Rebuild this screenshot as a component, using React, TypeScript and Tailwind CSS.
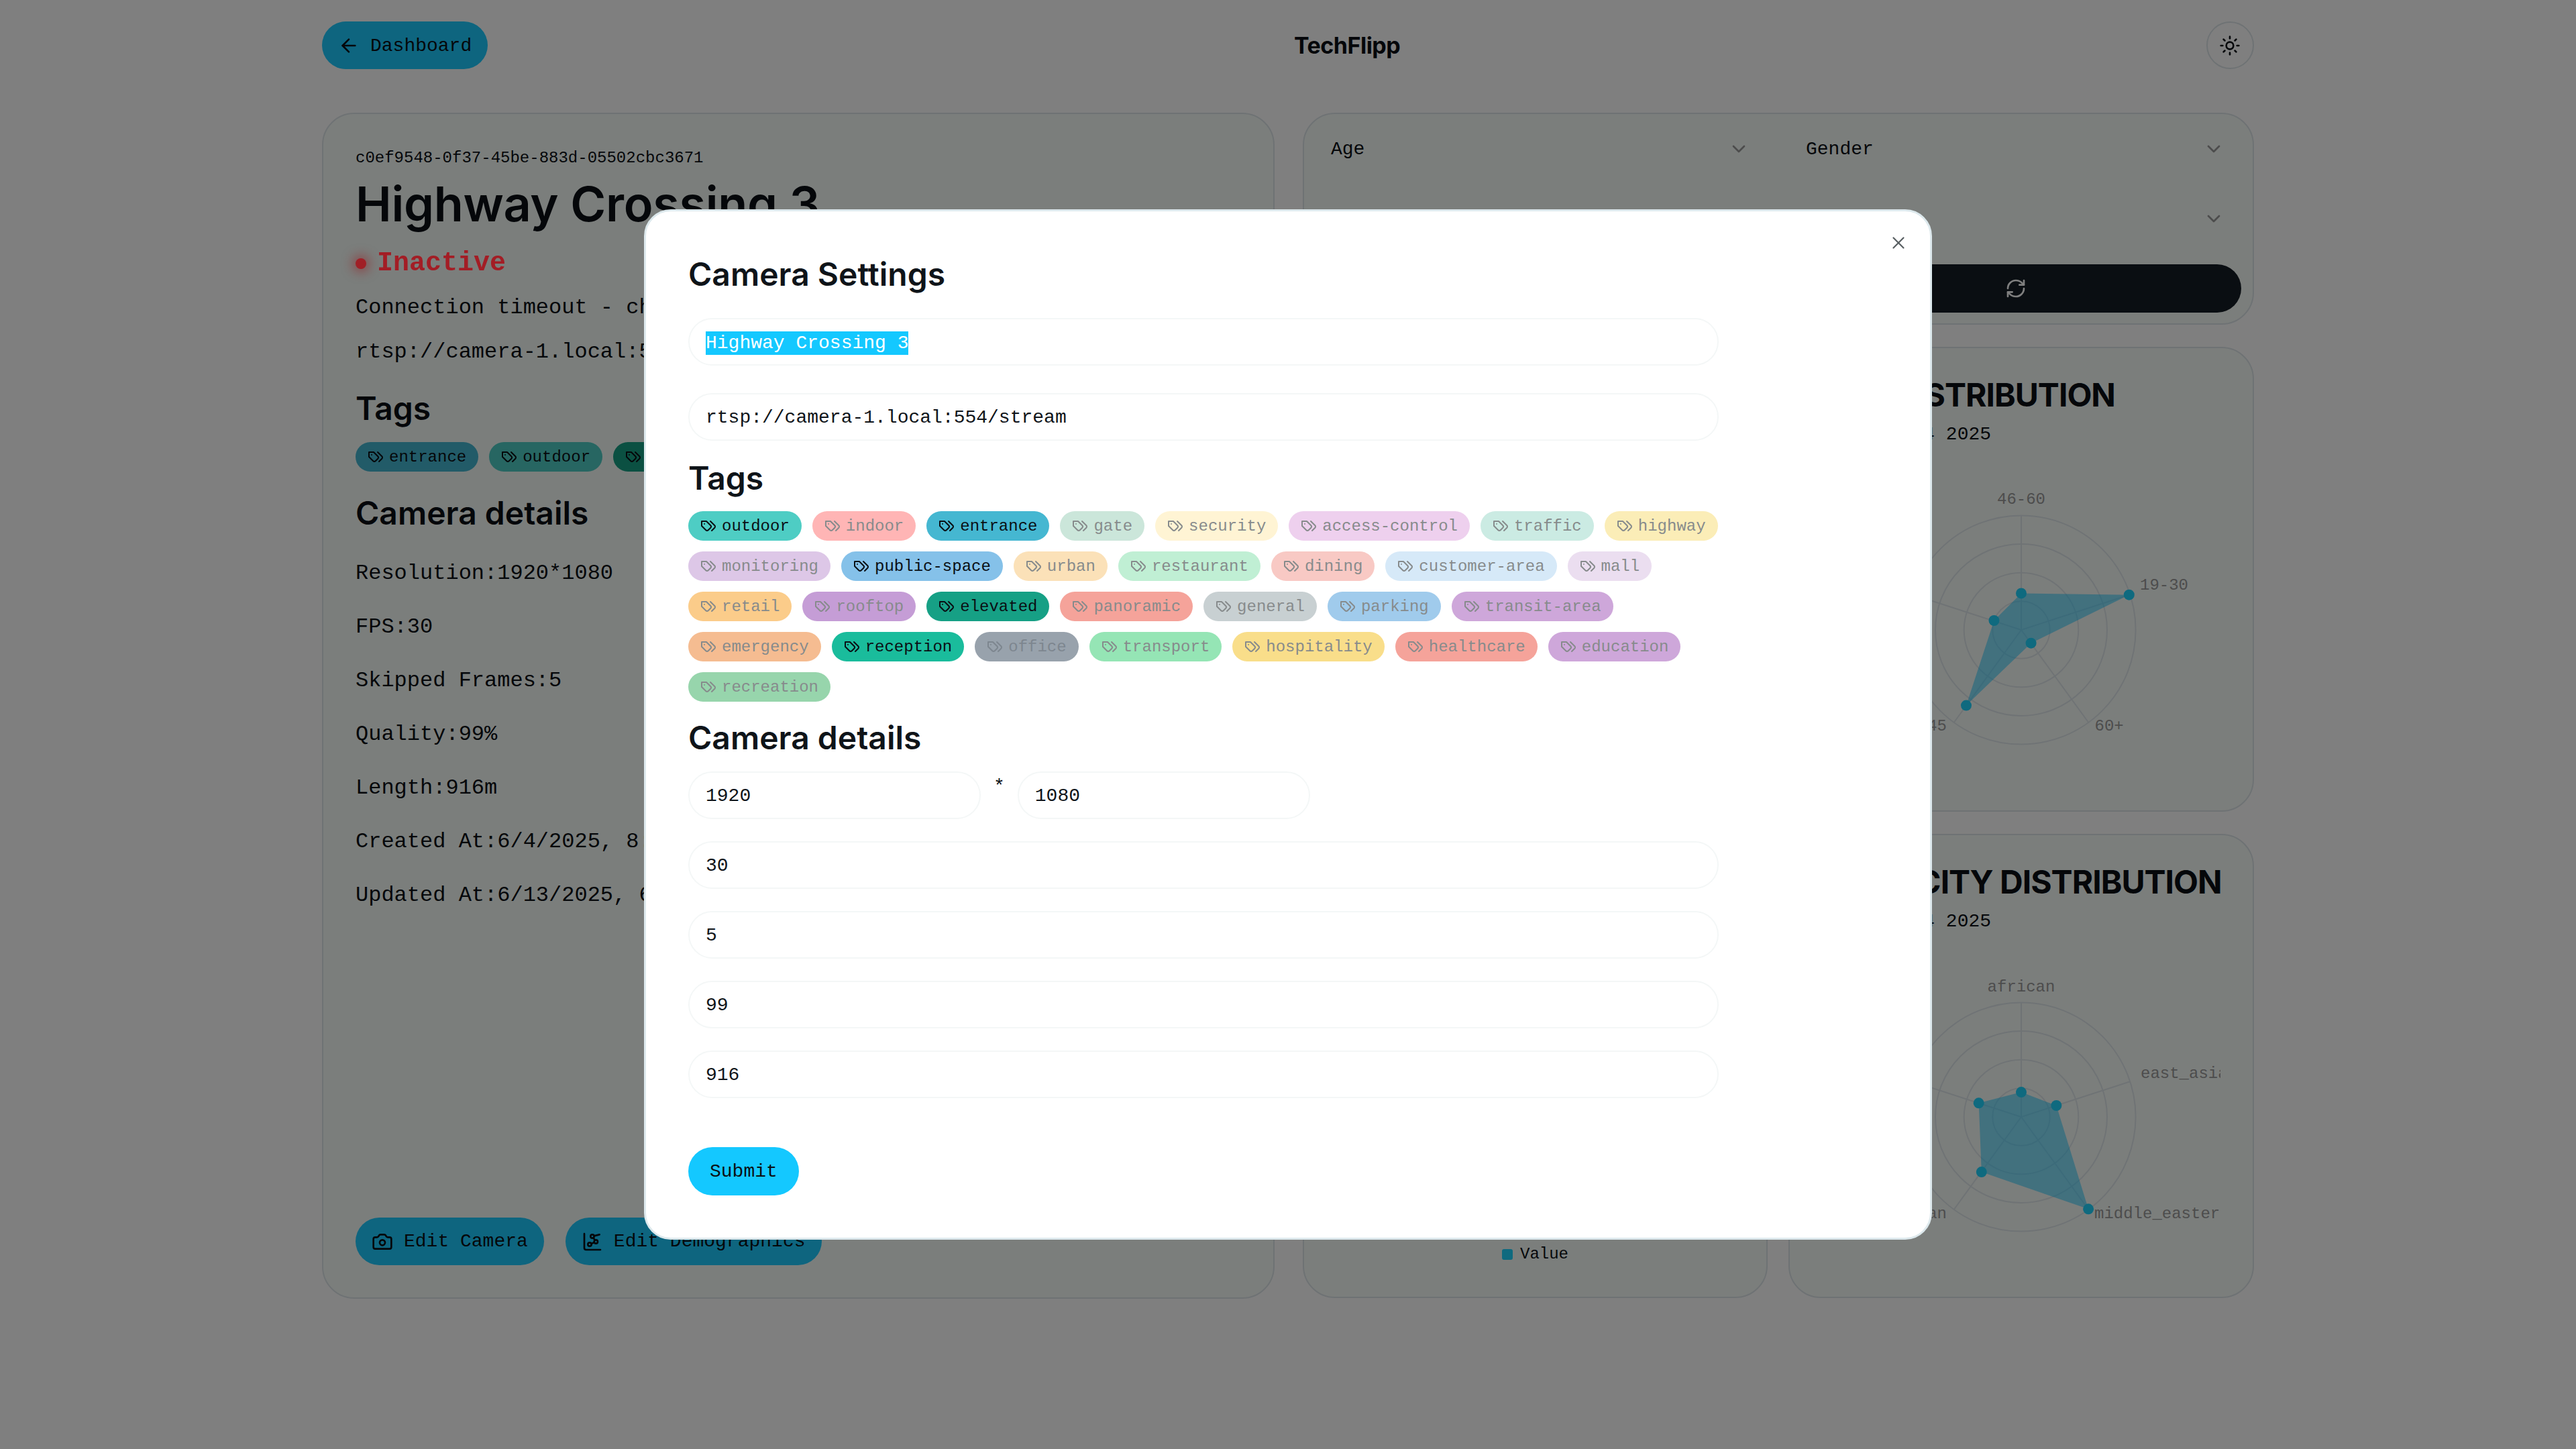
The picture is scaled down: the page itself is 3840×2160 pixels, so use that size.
import { ArrowLeft, Camera, ChartNetwork, ChevronDown, RefreshCw, Sun, X } from 'lucide-react';

const MONO = "font-['Liberation_Mono',monospace]";
const SANS = "font-['Inter',sans-serif]";

type Tag = { name: string; bg: string; active?: boolean; text?: string };
type AxisLabel = { text: string; x: number; y: number; anchor: 'start' | 'middle' | 'end' };

const TAGS: Tag[] = [
  { name: 'outdoor', bg: 'bg-[#4ecdc4]', active: true },
  { name: 'indoor', bg: 'bg-[#ffb5b5]' },
  { name: 'entrance', bg: 'bg-[#45b7d1]', active: true },
  { name: 'gate', bg: 'bg-[#cbe6da]' },
  { name: 'security', bg: 'bg-[#fff4d4]' },
  { name: 'access-control', bg: 'bg-[#eed0ee]' },
  { name: 'traffic', bg: 'bg-[#cbebe3]' },
  { name: 'highway', bg: 'bg-[#fbedb7]' },
  { name: 'monitoring', bg: 'bg-[#ddc7e7]' },
  { name: 'public-space', bg: 'bg-[#85c1e9]', active: true },
  { name: 'urban', bg: 'bg-[#fbe1b8]' },
  { name: 'restaurant', bg: 'bg-[#c0efd4]' },
  { name: 'dining', bg: 'bg-[#f8c9c4]' },
  { name: 'customer-area', bg: 'bg-[#d6e9f8]' },
  { name: 'mall', bg: 'bg-[#ebdef0]' },
  { name: 'retail', bg: 'bg-[#fbcc8a]' },
  { name: 'rooftop', bg: 'bg-[#c59dd6]' },
  { name: 'elevated', bg: 'bg-[#16a085]', active: true },
  { name: 'panoramic', bg: 'bg-[#f5a39a]' },
  { name: 'general', bg: 'bg-[#c8d0d2]' },
  { name: 'parking', bg: 'bg-[#a0cbec]' },
  { name: 'transit-area', bg: 'bg-[#cea7da]' },
  { name: 'emergency', bg: 'bg-[#f5bc91]' },
  { name: 'reception', bg: 'bg-[#1abc9c]', active: true },
  { name: 'office', bg: 'bg-[#98a2ac]', text: 'text-[#7d868f]' },
  { name: 'transport', bg: 'bg-[#95e5b5]' },
  { name: 'hospitality', bg: 'bg-[#f9de8a]' },
  { name: 'healthcare', bg: 'bg-[#f5a39a]' },
  { name: 'education', bg: 'bg-[#cea7da]' },
  { name: 'recreation', bg: 'bg-[#97d5ac]' },
];

const DETAILS = [
  'Resolution:1920*1080',
  'FPS:30',
  'Skipped Frames:5',
  'Quality:99%',
  'Length:916m',
  'Created At:6/4/2025, 8:15:32 AM',
  'Updated At:6/13/2025, 6:42:10 PM',
];

const AGE_POINTS = [
  [0, -54.6],
  [160.8, -52.3],
  [14.6, 19.7],
  [-82, 112.6],
  [-40.5, -14],
];

const ETHNICITY_POINTS = [
  [0, -36.9],
  [52.4, -17],
  [100.1, 137.3],
  [-59.2, 82.1],
  [-63.3, -20.7],
];

function TagIcon() {
  return (
    <svg width="24" height="24" viewBox="0 0 24 24" fill="none" stroke="currentColor" strokeWidth="2" strokeLinecap="round" strokeLinejoin="round" className="shrink-0">
      <path d="M9 5H2v7l6.29 6.29c.94.94 2.48.94 3.42 0l3.58-3.58c.94-.94.94-2.48 0-3.42L9 5Z" />
      <path d="M6 9.01V9" />
      <path d="m15 5 6.3 6.3a2.4 2.4 0 0 1 0 3.4L17 19" />
    </svg>
  );
}

function TagPill({ tag }: { tag: Tag }) {
  const color = tag.active ? 'text-[#0a0f14]' : tag.text || 'text-[#878b8c]';
  return (
    <span className={`inline-flex items-center gap-2 h-[44px] px-[18px] rounded-full text-[24px] ${tag.bg} ${color}`}>
      <TagIcon />
      <span className="pt-[1px]">{tag.name}</span>
    </span>
  );
}

function Field({ value, className = 'w-full' }: { value: string; className?: string }) {
  return (
    <div className={`h-[71px] flex items-center px-6 pt-[3px] border-2 border-[#f4f7f7] rounded-full text-[28px] text-[#0f1419] ${className}`}>
      {value}
    </div>
  );
}

function SelectBox({ label }: { label?: string }) {
  return (
    <div className="h-[71px] flex items-center justify-between pl-[23px] pr-[25px] text-[28px] text-[#0a0f14]">
      <span className="pt-[2px]">{label}</span>
      <ChevronDown size={32} className="text-[#999999]" />
    </div>
  );
}

function RadarChart({ points, labels }: { points: number[][]; labels: AxisLabel[] }) {
  const spokes = [-90, -18, 54, 126, 198];
  const poly = points.map(([x, y]) => `${x},${y}`).join(' ');
  return (
    <svg width="594" height="469" viewBox="-297 -247 594 469">
      {[42.7, 85.3, 128, 170.6].map((r) => (
        <circle key={r} r={r} fill="none" stroke="#dfe7ea" strokeWidth="2" />
      ))}
      {spokes.map((a) => (
        <line key={a} x1="0" y1="0" x2={170.6 * Math.cos((a * Math.PI) / 180)} y2={170.6 * Math.sin((a * Math.PI) / 180)} stroke="#dfe7ea" strokeWidth="2" />
      ))}
      <polygon points={poly} fill="#14c8ff" fillOpacity="0.5" />
      {points.map(([x, y], i) => (
        <circle key={i} cx={x} cy={y} r="8" fill="#1ed4ff" />
      ))}
      {labels.map((l) => (
        <text key={l.text} x={l.x} y={l.y} textAnchor={l.anchor} dominantBaseline="central" fontSize="24" fill="#9a9a9a">
          {l.text}
        </text>
      ))}
    </svg>
  );
}

function ChartCard({ title, points, labels }: { title: string; points: number[][]; labels: AxisLabel[] }) {
  return (
    <div className="flex-1 px-12 pt-[50px] border-2 border-[#dde5e8] rounded-[48px] bg-[#f7fcf9]">
      <h3 className={`${SANS} text-[48px] leading-[40px] font-bold tracking-[-1px] whitespace-nowrap text-[#0a0f14]`}>{title}</h3>
      <p className="mt-[18px] mb-[23px] text-[28px] leading-[42px] text-[#0a0f14]">From Jun 4 2025</p>
      <RadarChart points={points} labels={labels} />
    </div>
  );
}

export default function App() {
  const leftTags = [TAGS[2], TAGS[0], TAGS[17]];

  return (
    <div className={`${MONO} relative min-h-screen bg-white px-[480px] pt-8 text-[#0a0f14]`}>
      <header className="flex items-center justify-between h-[71px]">
        <button className="flex items-center gap-4 h-[71px] px-6 rounded-full bg-[#1ccaff] text-[28px] text-[#0a0f14]">
          <ArrowLeft size={32} />
          <span className="pt-[2px]">Dashboard</span>
        </button>
        <div className={`${SANS} text-[34px] font-bold tracking-[-0.5px] text-[#0a0f14]`}>TechFlipp</div>
        <button className="flex items-center justify-center w-[71px] h-[71px] border-2 border-[#dde5e8] rounded-full">
          <Sun size={32} />
        </button>
      </header>

      <main className="grid grid-cols-[1420px_1418px] gap-x-[42px] mt-[65px]">
        <section className="flex flex-col h-[1768px] p-12 border-2 border-[#dde5e8] rounded-[48px] bg-[#f7fcf9] overflow-hidden">
          <div className="text-[24px] leading-[36px]">c0ef9548-0f37-45be-883d-05502cbc3671</div>
          <h1 className={`${SANS} mt-[10px] text-[72px] leading-[80px] font-semibold tracking-[-0.3px] whitespace-nowrap`}>Highway Crossing 3</h1>
          <div className="relative z-[60] flex items-center gap-4 mt-[19px] h-[60px] text-[40px] font-bold text-[#a31d25]">
            <span className="w-4 h-4 rounded-full bg-[#a01f26] shadow-[0_0_16px_5px_rgba(150,28,32,0.5)]" />
            Inactive
          </div>
          <div className="mt-3 text-[32px] leading-[48px] whitespace-nowrap">Connection timeout - check network settings</div>
          <div className="mt-[18px] text-[32px] leading-[48px]">rtsp://camera-1.local:554/stream</div>
          <h2 className={`${SANS} mt-6 text-[48px] leading-[72px] font-semibold`}>Tags</h2>
          <div className="flex gap-4 mt-[14px]">
            {leftTags.map((t) => (
              <TagPill key={t.name} tag={t} />
            ))}
          </div>
          <h2 className={`${SANS} mt-[26px] text-[48px] leading-[72px] font-semibold`}>Camera details</h2>
          <div className="flex flex-col gap-8 mt-[30px] text-[32px] leading-[48px] whitespace-nowrap">
            {DETAILS.map((d) => (
              <div key={d}>{d}</div>
            ))}
          </div>
          <div className="flex gap-8 mt-auto">
            <button className="flex items-center gap-4 h-[71px] px-6 rounded-full bg-[#1ccaff] text-[28px]">
              <Camera size={32} />
              Edit Camera
            </button>
            <button className="flex items-center gap-4 h-[71px] px-6 rounded-full bg-[#1ccaff] text-[28px]">
              <ChartNetwork size={32} />
              Edit Demographics
            </button>
          </div>
        </section>

        <section className="flex flex-col gap-[33px]">
          <div className="grid grid-cols-2 gap-x-9 gap-y-[33px] px-[17px] py-4 border-2 border-[#dde5e8] rounded-[48px] bg-[#f7fcf9]">
            <SelectBox label="Age" />
            <SelectBox label="Gender" />
            <SelectBox />
            <SelectBox />
            <SelectBox />
            <button className="flex items-center justify-center h-[72px] rounded-full bg-[#141d24] text-[#ffffff]">
              <RefreshCw size={32} />
            </button>
          </div>

          <div className="grid grid-cols-[693px_694px] gap-x-[31px] h-[1418px]">
            <div className="relative border-2 border-[#dde5e8] rounded-[48px] bg-[#f7fcf9]">
              <div className="absolute bottom-[45px] inset-x-0 flex items-center justify-center gap-[11px] text-[24px]">
                <span className="w-4 h-4 rounded-[3px] bg-[#1ed4ff]" />
                Value
              </div>
            </div>
            <div className="flex flex-col gap-[33px]">
              <ChartCard
                title="AGE DISTRIBUTION"
                points={AGE_POINTS}
                labels={[
                  { text: '46-60', x: 0, y: -195, anchor: 'middle' },
                  { text: '19-30', x: 177, y: -67, anchor: 'start' },
                  { text: '60+', x: 109.5, y: 143, anchor: 'start' },
                  { text: '31-45', x: -111, y: 143, anchor: 'end' },
                  { text: '0-18', x: -177, y: -67, anchor: 'end' },
                ]}
              />
              <ChartCard
                title="ETHNICITY DISTRIBUTION"
                points={ETHNICITY_POINTS}
                labels={[
                  { text: 'african', x: 0, y: -194, anchor: 'middle' },
                  { text: 'east_asian', x: 178, y: -65, anchor: 'start' },
                  { text: 'middle_eastern', x: 109, y: 144, anchor: 'start' },
                  { text: 'south_asian', x: -111, y: 144, anchor: 'end' },
                  { text: 'european', x: -178, y: -65, anchor: 'end' },
                ]}
              />
            </div>
          </div>
        </section>
      </main>

      {/* modal over a dimmed page */}
      <div className="fixed inset-0 z-50 flex items-center justify-center bg-black/50">
        <div className="relative w-[1920px] h-[1536px] pt-[58px] pl-[63px] border-[3px] border-[#dde9ed] rounded-[40px] bg-white">
          <button className="absolute top-[32px] right-[32px] text-[#5a6063]">
            <X size={30} strokeWidth={1.8} />
          </button>
          <div className="w-[1536px]">
            <h2 className={`${SANS} text-[48px] leading-[72px] font-semibold text-[#0f1419]`}>Camera Settings</h2>
            <div className="flex flex-col gap-[41px] mt-[29px]">
              <div className="h-[71px] flex items-center px-6 pt-[3px] border-2 border-[#f4f7f7] rounded-full text-[28px]">
                <span className="bg-[#14c8ff] text-white leading-[35px]">Highway Crossing 3</span>
              </div>
              <Field value="rtsp://camera-1.local:554/stream" />
            </div>
            <h2 className={`${SANS} mt-5 text-[48px] leading-[72px] font-semibold text-[#0f1419]`}>Tags</h2>
            <div className="flex flex-wrap gap-4 mt-[13px]">
              {TAGS.map((t) => (
                <TagPill key={t.name} tag={t} />
              ))}
            </div>
            <h2 className={`${SANS} mt-[18px] text-[48px] leading-[72px] font-semibold text-[#0f1419]`}>Camera details</h2>
            <div className="flex flex-col gap-[33px] mt-[14px]">
              <div className="flex gap-[19px]">
                <Field value="1920" className="w-[436px]" />
                <span className="pt-[2px] text-[28px] leading-[42px]">*</span>
                <Field value="1080" className="w-[436px]" />
              </div>
              <Field value="30" />
              <Field value="5" />
              <Field value="99" />
              <Field value="916" />
            </div>
            <button className="h-[72px] mt-[73px] px-8 pt-[2px] rounded-full bg-[#14c8ff] text-[28px] text-[#0a0f14]">Submit</button>
          </div>
        </div>
      </div>
    </div>
  );
}
